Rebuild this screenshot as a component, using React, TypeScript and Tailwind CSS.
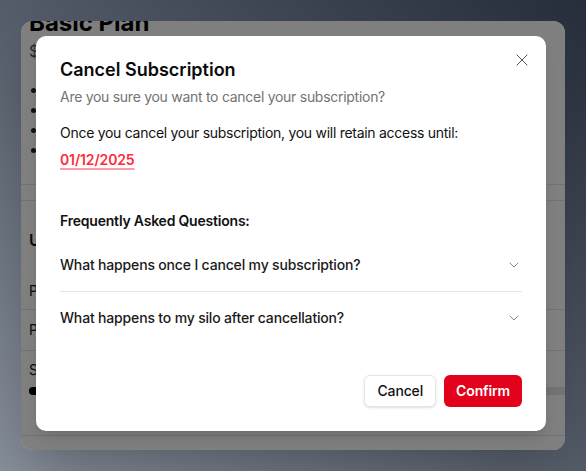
import { ChevronDown, X } from 'lucide-react';

const faqs = [
    'What happens once I cancel my subscription?',
    'What happens to my silo after cancellation?',
];

const planFeatures = ['Up to 3 silos', '10 GB storage', 'Email support', 'Basic analytics'];

const usageRows = ['Plan', 'Payment method'];

// 배경 카드 (모달 뒤에 보이는 구독 페이지)
const PlanPage = () => (
    <div className="-mt-[14px] text-neutral-900">
        <div className="px-2 pb-6">
            <h2 className="text-2xl leading-8 font-bold text-black">Basic Plan</h2>
            <p className="text-base leading-6 text-neutral-600">$9.99/month</p>
            <ul className="mt-[17px]">
                {planFeatures.map((feature) => (
                    <li key={feature} className="flex items-center gap-2 text-sm leading-5">
                        <span className="ml-[2px] h-[5px] w-[5px] rounded-full bg-neutral-800" />
                        {feature}
                    </li>
                ))}
            </ul>
        </div>
        <div className="h-[17px] border-t border-b border-neutral-200" />
        <div className="px-2 pt-[27px]">
            <h3 className="text-base leading-6 font-semibold">Usage</h3>
        </div>
        <div className="mt-[29px]">
            {usageRows.map((row, index) => (
                <div
                    key={row}
                    className={`border-b border-neutral-200 px-2 pb-2 text-sm leading-5 ${
                        index === 0 ? 'pt-0' : 'pt-[10px] pb-[10px]'
                    }`}
                >
                    {row}
                </div>
            ))}
            <div className="px-2 pt-[9px] text-sm leading-5">Storage</div>
            <div className="mt-[7px] ml-2 h-2 rounded-l-full bg-neutral-200">
                <div className="h-2 w-[40%] rounded-full bg-black" />
            </div>
            <div className="mt-[40px] border-t border-neutral-200" />
        </div>
    </div>
);

const CancelDialog = () => (
    <div className="absolute top-[15px] left-[15px] w-[510px] rounded-[10px] bg-white px-6 pt-5 pb-6 shadow-lg">
        <button
            type="button"
            className="absolute top-[14px] right-[14px] text-neutral-600"
            aria-label="Close"
        >
            <X size={20} strokeWidth={1.2} />
        </button>

        <h2 className="text-lg leading-7 font-semibold text-[#0a0a0a]">
            Cancel Subscription
        </h2>
        <p className="mt-[3px] text-sm leading-5 tracking-[-0.02em] text-neutral-500">
            Are you sure you want to cancel your subscription?
        </p>
        <p className="mt-4 text-sm leading-5 tracking-[-0.02em] text-[#111]">
            Once you cancel your subscription, you will retain access until:
        </p>
        <p className="mt-[7px] text-sm leading-5 font-semibold tracking-[-0.01em] text-[#fb2c3c] underline decoration-[#ff9aa3] decoration-2 underline-offset-[3px]">
            01/12/2025
        </p>

        <h3 className="mt-[41px] text-sm leading-5 font-semibold tracking-[-0.015em] text-[#111]">
            Frequently Asked Questions:
        </h3>
        <div className="mt-2">
            {faqs.map((question, index) => (
                <div
                    key={question}
                    className={`flex items-center justify-between py-4 ${
                        index < faqs.length - 1 ? 'border-b border-neutral-200' : ''
                    }`}
                >
                    <span className="text-sm leading-5 font-medium tracking-[-0.012em] text-[#1a1a1a]">
                        {question}
                    </span>
                    <ChevronDown size={16} strokeWidth={1.3} className="text-neutral-500" />
                </div>
            ))}
        </div>

        <div className="mt-[31px] flex justify-end gap-2">
            <button
                type="button"
                className="h-8 rounded-md border border-neutral-200 bg-white px-3 text-sm font-medium tracking-[-0.01em] text-[#111] shadow-sm"
            >
                Cancel
            </button>
            <button
                type="button"
                className="h-8 rounded-md bg-[#e2001a] px-3 text-sm font-semibold tracking-[-0.01em] text-white"
            >
                Confirm
            </button>
        </div>
    </div>
);

const App = () => {
    return (
        <div className="h-[471px] w-[586px] overflow-hidden bg-linear-to-tr from-[#868e9a] to-[#262e3b] p-[21px] [font-family:Inter,'Noto_Sans',sans-serif]">
            <div className="relative h-[429px] overflow-hidden rounded-xl bg-white shadow-2xl">
                <PlanPage />
                <div className="absolute inset-0 bg-black/50" />
                <CancelDialog />
            </div>
        </div>
    );
};

export default App;
